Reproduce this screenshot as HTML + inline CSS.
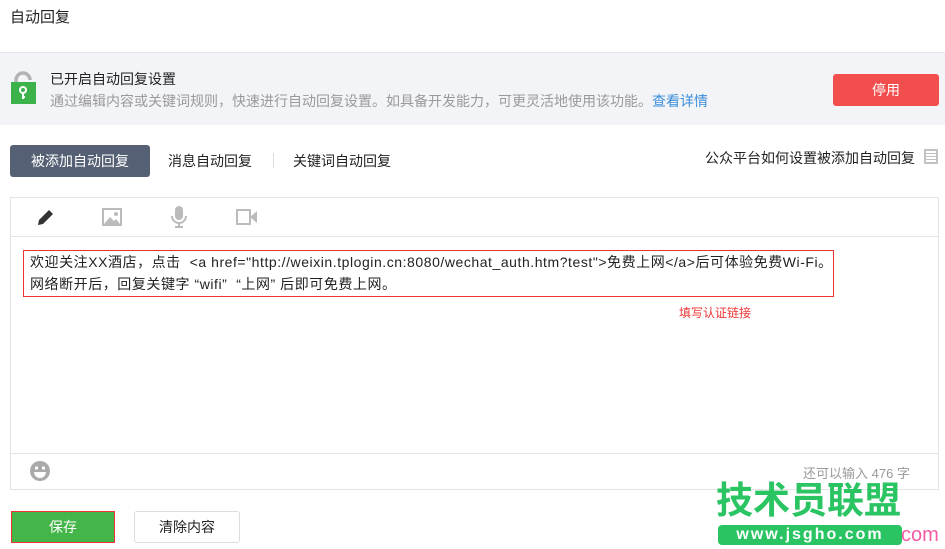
<!DOCTYPE html>
<html><head><meta charset="utf-8"><style>
*{margin:0;padding:0;box-sizing:border-box}
body{width:945px;height:549px;overflow:hidden;background:#fff;font-family:"Liberation Sans","Noto Sans CJK SC",sans-serif;color:#222;position:relative}
.a{position:absolute;white-space:nowrap}
</style></head><body>
<div class="a" style="left:10px;top:6px;font-size:15px">自动回复</div>
<div class="a" style="left:0;top:52px;width:945px;height:73px;background:#f3f4f7;border-top:1px solid #e4e6ea"></div>
<svg class="a" style="left:10px;top:70px" width="28" height="36" viewBox="0 0 28 36"><path d="M6 14V10a7 7 0 0 1 14 0" fill="none" stroke="#b3b3b3" stroke-width="3.5"/><rect x="1" y="12" width="25" height="22" fill="#3cb34a"/><circle cx="13" cy="20" r="3" fill="none" stroke="#fff" stroke-width="2"/><path d="M13 23v6M13 27h2" stroke="#fff" stroke-width="2"/></svg>
<div class="a" style="left:50px;top:69px;font-size:14px;color:#222">已开启自动回复设置</div>
<div class="a" style="left:50px;top:91px;font-size:14px;color:#9a9a9a">通过编辑内容或关键词规则，快速进行自动回复设置。如具备开发能力，可更灵活地使用该功能。<span style="color:#3b8ddb">查看详情</span></div>
<div class="a" style="left:833px;top:74px;width:106px;height:32px;background:#f24e4e;border-radius:3px;color:#fff;font-size:14px;text-align:center;line-height:32px">停用</div>
<div class="a" style="left:10px;top:145px;width:140px;height:32px;background:#556074;border-radius:3px;color:#fff;font-size:14px;text-align:center;line-height:32px">被添加自动回复</div>
<div class="a" style="left:168px;top:151px;font-size:14px">消息自动回复</div>
<div class="a" style="left:273px;top:153px;width:1px;height:15px;background:#ddd"></div>
<div class="a" style="left:293px;top:151px;font-size:14px">关键词自动回复</div>
<div class="a" style="left:705px;top:148px;font-size:14px">公众平台如何设置被添加自动回复</div>
<div class="a" style="left:924px;top:149px;width:14px;height:15px;border:2px solid #c2c2c2;background:repeating-linear-gradient(#fff 0 2px,#c2c2c2 2px 3px)"></div>
<div class="a" style="left:10px;top:197px;width:929px;height:293px;border:1px solid #e4e4e4"></div>
<div class="a" style="left:11px;top:236px;width:927px;height:1px;background:#e4e4e4"></div>
<div class="a" style="left:11px;top:453px;width:927px;height:1px;background:#e4e4e4"></div>
<svg class="a" style="left:36px;top:207px" width="20" height="20" viewBox="0 0 20 20"><path d="M2 18l1-5L13 3l4 4L7 17z" fill="#333"/></svg>
<svg class="a" style="left:102px;top:208px" width="20" height="18"><rect x="0" y="0" width="20" height="18" fill="#bbb"/><rect x="2" y="2" width="16" height="14" fill="#fff"/><path d="M2 16l6-7 4 4 2-2 4 5z" fill="#bbb"/><circle cx="14" cy="6" r="2" fill="#bbb"/></svg>
<svg class="a" style="left:171px;top:206px" width="16" height="22"><rect x="4" y="0" width="8" height="14" rx="4" fill="#bbb"/><path d="M1 10a7 7 0 0 0 14 0M8 17v4M4 21h8" fill="none" stroke="#bbb" stroke-width="2"/></svg>
<svg class="a" style="left:236px;top:209px" width="21" height="16"><rect x="1" y="1" width="13" height="14" fill="none" stroke="#bbb" stroke-width="2"/><path d="M14 8l7-6v12z" fill="#bbb"/></svg>
<div class="a" style="left:23px;top:250px;width:811px;height:47px;border:1px solid #e33"></div>
<div class="a" style="left:30px;top:251px;font-size:14px;line-height:22px;color:#222;letter-spacing:0.55px">欢迎关注XX酒店，点击 &nbsp;&lt;a href="http://weixin.tplogin.cn:8080/wechat_auth.htm?test"&gt;免费上网&lt;/a&gt;后可体验免费Wi-Fi。<br>网络断开后，回复关键字 “wifi” &nbsp;“上网” 后即可免费上网。</div>
<div class="a" style="left:679px;top:304px;font-size:12px;color:#e33">填写认证链接</div>
<svg class="a" style="left:30px;top:461px" width="20" height="20"><circle cx="10" cy="10" r="10" fill="#aaa"/><circle cx="6.5" cy="7" r="1.6" fill="#fff"/><circle cx="13.5" cy="7" r="1.6" fill="#fff"/><path d="M4 11h12a6 6 0 0 1-12 0z" fill="#fff"/></svg>
<div class="a" style="left:803px;top:463px;font-size:13px;color:#999">还可以输入 476 字</div>
<div class="a" style="left:11px;top:511px;width:104px;height:32px;background:#44b549;border:1px solid #e33;color:#fff;font-size:14px;text-align:center;line-height:30px">保存</div>
<div class="a" style="left:134px;top:511px;width:106px;height:32px;border:1px solid #ddd;border-radius:3px;font-size:14px;text-align:center;line-height:30px">清除内容</div>
<div class="a" style="left:716px;top:478px;font-size:37px;line-height:46px;font-weight:bold;color:#2ac463">技术员联盟</div>
<div class="a" style="left:718px;top:525px;width:184px;height:20px;background:#2ac463;border-radius:4px;color:#fff;font-size:16px;font-weight:bold;text-align:center;line-height:20px;letter-spacing:2px">www.jsgho.com</div>
<div class="a" style="left:901px;top:524px;font-size:20px;color:#f25ba4">com</div>
</body></html>
